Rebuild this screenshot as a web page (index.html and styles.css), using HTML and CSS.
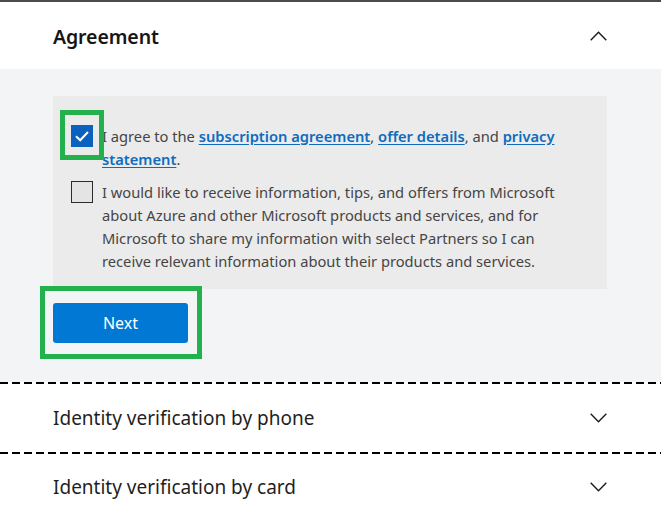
FILE: index.html
```html
<!DOCTYPE html>
<html lang="en">
<head>
<meta charset="utf-8">
<title>Agreement</title>
<link rel="stylesheet" href="styles.css">
</head>
<body>
<div class="page">
  <section class="acc-header">
    <h2 class="acc-title">Agreement</h2>
    <svg class="chevron" width="17" height="10" viewBox="0 0 17 10"><path d="M0.7 9.3 L8.5 1.3 L16.3 9.3" fill="none" stroke="#1b1b1b" stroke-width="1.4"/></svg>
  </section>
  <section class="acc-body">
    <div class="consent-box">
      <div class="consent-row">
        <span class="check checked annotated-check">
          <svg width="22" height="22" viewBox="0 0 22 22"><path d="M5 11.3 L9.2 15.3 L17 7" fill="none" stroke="#fff" stroke-width="2"/></svg>
        </span>
        <p class="consent-text">I agree to the <a href="#">subscription agreement</a>, <a href="#">offer details</a>, and <a href="#">privacy statement</a>.</p>
      </div>
      <div class="consent-row">
        <span class="check"></span>
        <p class="consent-text">I would like to receive information, tips, and offers from Microsoft about Azure and other Microsoft products and services, and for Microsoft to share my information with select Partners so I can receive relevant information about their products and services.</p>
      </div>
    </div>
    <div class="btn-wrap">
      <button class="btn-next" type="button">Next</button>
    </div>
  </section>
  <section class="acc-item">
    <span class="acc-item-title">Identity verification by phone</span>
    <svg class="chevron" width="17" height="10" viewBox="0 0 17 10"><path d="M0.7 0.7 L8.5 8.7 L16.3 0.7" fill="none" stroke="#1b1b1b" stroke-width="1.4"/></svg>
  </section>
  <section class="acc-item">
    <span class="acc-item-title">Identity verification by card</span>
    <svg class="chevron" width="17" height="10" viewBox="0 0 17 10"><path d="M0.7 0.7 L8.5 8.7 L16.3 0.7" fill="none" stroke="#1b1b1b" stroke-width="1.4"/></svg>
  </section>
</div>
</body>
</html>
```

FILE: styles.css
```css
* { box-sizing: border-box; }
html, body { margin: 0; padding: 0; background: #fff; }
body {
  font-family: "Noto Sans", "Open Sans", sans-serif;
  color: #3f3f3f;
  overflow: hidden;
}
.page {
  border-top: 2px solid #4b4b4f;
}
.acc-header {
  height: 67px;
  padding: 1px 54px 0 53px;
  display: flex;
  align-items: center;
  justify-content: space-between;
}
.acc-title {
  margin: 0;
  font-size: 19.5px;
  font-weight: 600;
  color: #161616;
  letter-spacing: -0.1px;
}
.chevron { display: block; }
.acc-body {
  background: #f3f4f6;
  padding: 27px 54px 39px 53px;
}
.consent-box {
  background: #ebebeb;
  padding: 29px 18px 16px 18px;
  display: flex;
  flex-direction: column;
  gap: 10px;
}
.consent-row {
  display: flex;
  align-items: flex-start;
  gap: 9px;
}
.check {
  flex: 0 0 22px;
  width: 22px;
  height: 22px;
  border: 1px solid #2b2b2b;
  background: #e4e4e4;
  position: relative;
}
.check.checked {
  border: none;
  background: #0a62be;
}
.check svg { display: block; }
.annotated-check::after {
  content: "";
  position: absolute;
  top: -15px;
  left: -11px;
  right: -11px;
  bottom: -13px;
  border: 5px solid #22b14c;
}
.consent-text {
  margin: 0;
  width: 465px;
  font-size: 14.7px;
  line-height: 23px;
  color: #454545;
}
.consent-text a {
  color: #0f6cbd;
  font-weight: 600;
  text-decoration: underline;
  text-underline-offset: 2px;
}
.btn-wrap {
  margin-top: 14px;
  display: flex;
}
.btn-next {
  position: relative;
  width: 135px;
  height: 40px;
  border: none;
  border-radius: 3px;
  background: #0078d4;
  color: #fff;
  font-family: "Noto Sans", "Open Sans", sans-serif;
  font-size: 16px;
  padding: 0;
}
.btn-next::after {
  content: "";
  position: absolute;
  top: -17px;
  left: -13px;
  right: -14px;
  bottom: -16px;
  border: 5px solid #22b14c;
}
.acc-item {
  height: 70px;
  padding: 2px 54px 0 53px;
  display: flex;
  align-items: center;
  justify-content: space-between;
  background-image: repeating-linear-gradient(to right, #000 0 8px, transparent 8px 12px);
  background-size: 100% 2px;
  background-repeat: no-repeat;
  background-position: 0 0;
}
.acc-item:last-child { padding-bottom: 2px; }
.acc-item-title {
  font-size: 19px;
  color: #1f1f1f;
  font-weight: 400;
}
```
